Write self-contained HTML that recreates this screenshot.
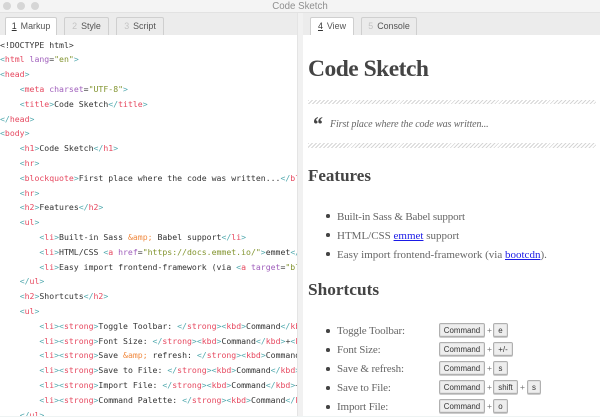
<!DOCTYPE html>
<html><head><meta charset="utf-8">
<style>
html,body{margin:0;padding:0;width:600px;height:417px;overflow:hidden;background:#fff}
#r{position:relative;width:600px;height:417px;overflow:hidden;filter:blur(.35px);font-family:"Liberation Sans",sans-serif}
#r div{position:absolute;box-sizing:border-box}
.dot{width:8px;height:8px;border-radius:50%;background:#d6d6d6;top:2px}
.tab{top:17px;height:18px;background:#ebebeb;border:1px solid #cfcfcf;border-bottom:0;border-radius:2px 2px 0 0;font-size:8.9px;line-height:17px;color:#555;white-space:nowrap;text-align:center}
.tab.on{background:#fff;top:17px}
.tab i{font-style:normal;color:#c4c4c4;margin-right:4px}
.tab.on i{color:#333;text-decoration:underline}
#code{left:0;top:35px;width:297px;height:382px;overflow:hidden;background:#fff}
.l{left:0;height:15px;width:400px;font:8.18px/15px "DejaVu Sans Mono",monospace;color:#333;white-space:pre}
.l b{font-weight:normal;color:#4fa8ad}
.l u{text-decoration:none;color:#e6485f}
.l em{font-style:normal;color:#a05fbc}
.l s{text-decoration:none;color:#82942f}
.l q{quotes:none;color:#f08a40}
.l q:before,.l q:after{content:none}
.sf{font-family:"Liberation Serif",serif;white-space:nowrap}
.hr{left:308px;width:288px;height:4.5px;background:repeating-linear-gradient(135deg,#d6d6d6 0 1px,#fff 1px 2.8px)}
.li{left:337px;font-size:11px;line-height:15px;color:#666}
.li a{color:#1a1ae6;text-decoration:underline}
.bu{left:326px;width:3.6px;height:3.6px;border-radius:50%;background:#444}
.k{height:14px;background:#eee;border:1px solid #b0b0b0;border-radius:2px;box-shadow:inset 0 0 0 1px #e2e2e2,0 1px 0 #ccc;font-size:7.9px;line-height:13px;text-align:center;color:#333}
.p{font-size:8.5px;line-height:14px;color:#777}
</style></head><body>
<div id="r">
<div style="left:0;top:0;width:600px;height:13px;background:#f4f4f4;border-bottom:1px solid #e2e2e2"></div>
<div class="dot" style="left:3px"></div><div class="dot" style="left:17px"></div><div class="dot" style="left:31px"></div>
<div style="left:0;top:0;width:600px;text-align:center;font-size:9.7px;line-height:13px;color:#8f8f8f">Code Sketch</div>
<div style="left:0;top:13px;width:600px;height:22px;background:#ececec"></div>
<div style="left:297px;top:13px;width:6px;height:404px;background:#f1f1f1;border-left:1px solid #e4e4e4"></div>
<div class="tab on" style="left:5px;width:52px"><i>1</i>Markup</div>
<div class="tab" style="left:64px;width:45px"><i>2</i>Style</div>
<div class="tab" style="left:116px;width:48px"><i>3</i>Script</div>
<div class="tab on" style="left:310px;width:44px"><i>4</i>View</div>
<div class="tab" style="left:361px;width:56px"><i>5</i>Console</div>

<div id="code">
<div class="l" style="top:2.5px">&lt;!DOCTYPE html&gt;</div>
<div class="l" style="top:17.3px"><b>&lt;</b><u>html</u> <em>lang</em>=<s>"en"</s><b>&gt;</b></div>
<div class="l" style="top:32.1px"><b>&lt;</b><u>head</u><b>&gt;</b></div>
<div class="l" style="top:46.9px">    <b>&lt;</b><u>meta</u> <em>charset</em>=<s>"UTF-8"</s><b>&gt;</b></div>
<div class="l" style="top:61.7px">    <b>&lt;</b><u>title</u><b>&gt;</b>Code Sketch<b>&lt;/</b><u>title</u><b>&gt;</b></div>
<div class="l" style="top:76.5px"><b>&lt;/</b><u>head</u><b>&gt;</b></div>
<div class="l" style="top:91.3px"><b>&lt;</b><u>body</u><b>&gt;</b></div>
<div class="l" style="top:106.1px">    <b>&lt;</b><u>h1</u><b>&gt;</b>Code Sketch<b>&lt;/</b><u>h1</u><b>&gt;</b></div>
<div class="l" style="top:120.9px">    <b>&lt;</b><u>hr</u><b>&gt;</b></div>
<div class="l" style="top:135.7px">    <b>&lt;</b><u>blockquote</u><b>&gt;</b>First place where the code was written...<b>&lt;/</b><u>blockquote</u><b>&gt;</b></div>
<div class="l" style="top:150.5px">    <b>&lt;</b><u>hr</u><b>&gt;</b></div>
<div class="l" style="top:165.3px">    <b>&lt;</b><u>h2</u><b>&gt;</b>Features<b>&lt;/</b><u>h2</u><b>&gt;</b></div>
<div class="l" style="top:180.1px">    <b>&lt;</b><u>ul</u><b>&gt;</b></div>
<div class="l" style="top:194.9px">        <b>&lt;</b><u>li</u><b>&gt;</b>Built-in Sass <q>&amp;amp;</q> Babel support<b>&lt;/</b><u>li</u><b>&gt;</b></div>
<div class="l" style="top:209.7px">        <b>&lt;</b><u>li</u><b>&gt;</b>HTML/CSS <b>&lt;</b><u>a</u> <em>href</em>=<s>"https://docs.emmet.io/"</s><b>&gt;</b>emmet<b>&lt;/</b><u>a</u><b>&gt;</b></div>
<div class="l" style="top:224.5px">        <b>&lt;</b><u>li</u><b>&gt;</b>Easy import frontend-framework (via <b>&lt;</b><u>a</u> <em>target</em>=<s>"blank"</s><b>&gt;</b></div>
<div class="l" style="top:239.3px">    <b>&lt;/</b><u>ul</u><b>&gt;</b></div>
<div class="l" style="top:254.1px">    <b>&lt;</b><u>h2</u><b>&gt;</b>Shortcuts<b>&lt;/</b><u>h2</u><b>&gt;</b></div>
<div class="l" style="top:268.9px">    <b>&lt;</b><u>ul</u><b>&gt;</b></div>
<div class="l" style="top:283.7px">        <b>&lt;</b><u>li</u><b>&gt;&lt;</b><u>strong</u><b>&gt;</b>Toggle Toolbar: <b>&lt;/</b><u>strong</u><b>&gt;&lt;</b><u>kbd</u><b>&gt;</b>Command<b>&lt;/</b><u>kbd</u><b>&gt;</b></div>
<div class="l" style="top:298.5px">        <b>&lt;</b><u>li</u><b>&gt;&lt;</b><u>strong</u><b>&gt;</b>Font Size: <b>&lt;/</b><u>strong</u><b>&gt;&lt;</b><u>kbd</u><b>&gt;</b>Command<b>&lt;/</b><u>kbd</u><b>&gt;</b>+<b>&lt;</b><u>kbd</u><b>&gt;</b></div>
<div class="l" style="top:313.3px">        <b>&lt;</b><u>li</u><b>&gt;&lt;</b><u>strong</u><b>&gt;</b>Save <q>&amp;amp;</q> refresh: <b>&lt;/</b><u>strong</u><b>&gt;&lt;</b><u>kbd</u><b>&gt;</b>Command<b>&lt;/</b></div>
<div class="l" style="top:328.1px">        <b>&lt;</b><u>li</u><b>&gt;&lt;</b><u>strong</u><b>&gt;</b>Save to File: <b>&lt;/</b><u>strong</u><b>&gt;&lt;</b><u>kbd</u><b>&gt;</b>Command<b>&lt;/</b><u>kbd</u><b>&gt;</b></div>
<div class="l" style="top:342.9px">        <b>&lt;</b><u>li</u><b>&gt;&lt;</b><u>strong</u><b>&gt;</b>Import File: <b>&lt;/</b><u>strong</u><b>&gt;&lt;</b><u>kbd</u><b>&gt;</b>Command<b>&lt;/</b><u>kbd</u><b>&gt;</b>+</div>
<div class="l" style="top:357.7px">        <b>&lt;</b><u>li</u><b>&gt;&lt;</b><u>strong</u><b>&gt;</b>Command Palette: <b>&lt;/</b><u>strong</u><b>&gt;&lt;</b><u>kbd</u><b>&gt;</b>Command<b>&lt;/</b><u>kbd</u><b>&gt;</b></div>
<div class="l" style="top:372.5px">    <b>&lt;/</b><u>ul</u><b>&gt;</b></div>
</div>

<div class="sf" style="left:308px;top:53px;font-size:23.5px;line-height:32px;font-weight:bold;color:#444;letter-spacing:-.5px">Code Sketch</div>
<div class="hr" style="top:99.5px"></div>
<div class="sf" style="left:312px;top:111px;font-size:21px;line-height:26px;font-style:italic;font-weight:bold;color:#444">“</div>
<div class="sf" style="left:330px;top:116.5px;font-size:10px;line-height:15px;font-style:italic;color:#666;letter-spacing:-.1px">First place where the code was written...</div>
<div class="hr" style="top:143px"></div>
<div class="sf" style="left:308px;top:165px;font-size:17px;line-height:22px;font-weight:bold;color:#444">Features</div>
<div class="bu" style="top:214px"></div><div class="sf li" style="top:209.5px;letter-spacing:-.14px">Built-in Sass &amp; Babel support</div>
<div class="bu" style="top:233px"></div><div class="sf li" style="top:228.5px">HTML/CSS <a>emmet</a> support</div>
<div class="bu" style="top:252px"></div><div class="sf li" style="top:247.5px">Easy import frontend-framework (via <a>bootcdn</a>).</div>
<div class="sf" style="left:308px;top:279px;font-size:17.3px;line-height:22px;font-weight:bold;color:#444">Shortcuts</div>
<div class="bu" style="top:329px"></div><div class="sf li" style="top:323.5px;letter-spacing:-.14px">Toggle Toolbar:</div>
<div class="bu" style="top:348px"></div><div class="sf li" style="top:342.5px;letter-spacing:-.14px">Font Size:</div>
<div class="bu" style="top:367px"></div><div class="sf li" style="top:361.5px;letter-spacing:-.14px">Save &amp; refresh:</div>
<div class="bu" style="top:386px"></div><div class="sf li" style="top:380.5px;letter-spacing:-.14px">Save to File:</div>
<div class="bu" style="top:405px"></div><div class="sf li" style="top:399.5px;letter-spacing:-.14px">Import File:</div>

<div class="k" style="left:439px;top:323px;width:46px">Command</div><div class="p" style="left:487px;top:323px">+</div><div class="k" style="left:493px;top:323px;width:15px">e</div>
<div class="k" style="left:439px;top:342px;width:46px">Command</div><div class="p" style="left:487px;top:342px">+</div><div class="k" style="left:493px;top:342px;width:20px">+/-</div>
<div class="k" style="left:439px;top:361px;width:46px">Command</div><div class="p" style="left:487px;top:361px">+</div><div class="k" style="left:493px;top:361px;width:15px">s</div>
<div class="k" style="left:439px;top:380px;width:46px">Command</div><div class="p" style="left:487px;top:380px">+</div><div class="k" style="left:493px;top:380px;width:25px">shift</div><div class="p" style="left:520px;top:380px">+</div><div class="k" style="left:527px;top:380px;width:14px">s</div>
<div class="k" style="left:439px;top:399px;width:46px">Command</div><div class="p" style="left:487px;top:399px">+</div><div class="k" style="left:493px;top:399px;width:15px">o</div>
<div style="left:0;top:416px;width:600px;height:1px;background:#eef3f3"></div>
</div>
</body></html>
